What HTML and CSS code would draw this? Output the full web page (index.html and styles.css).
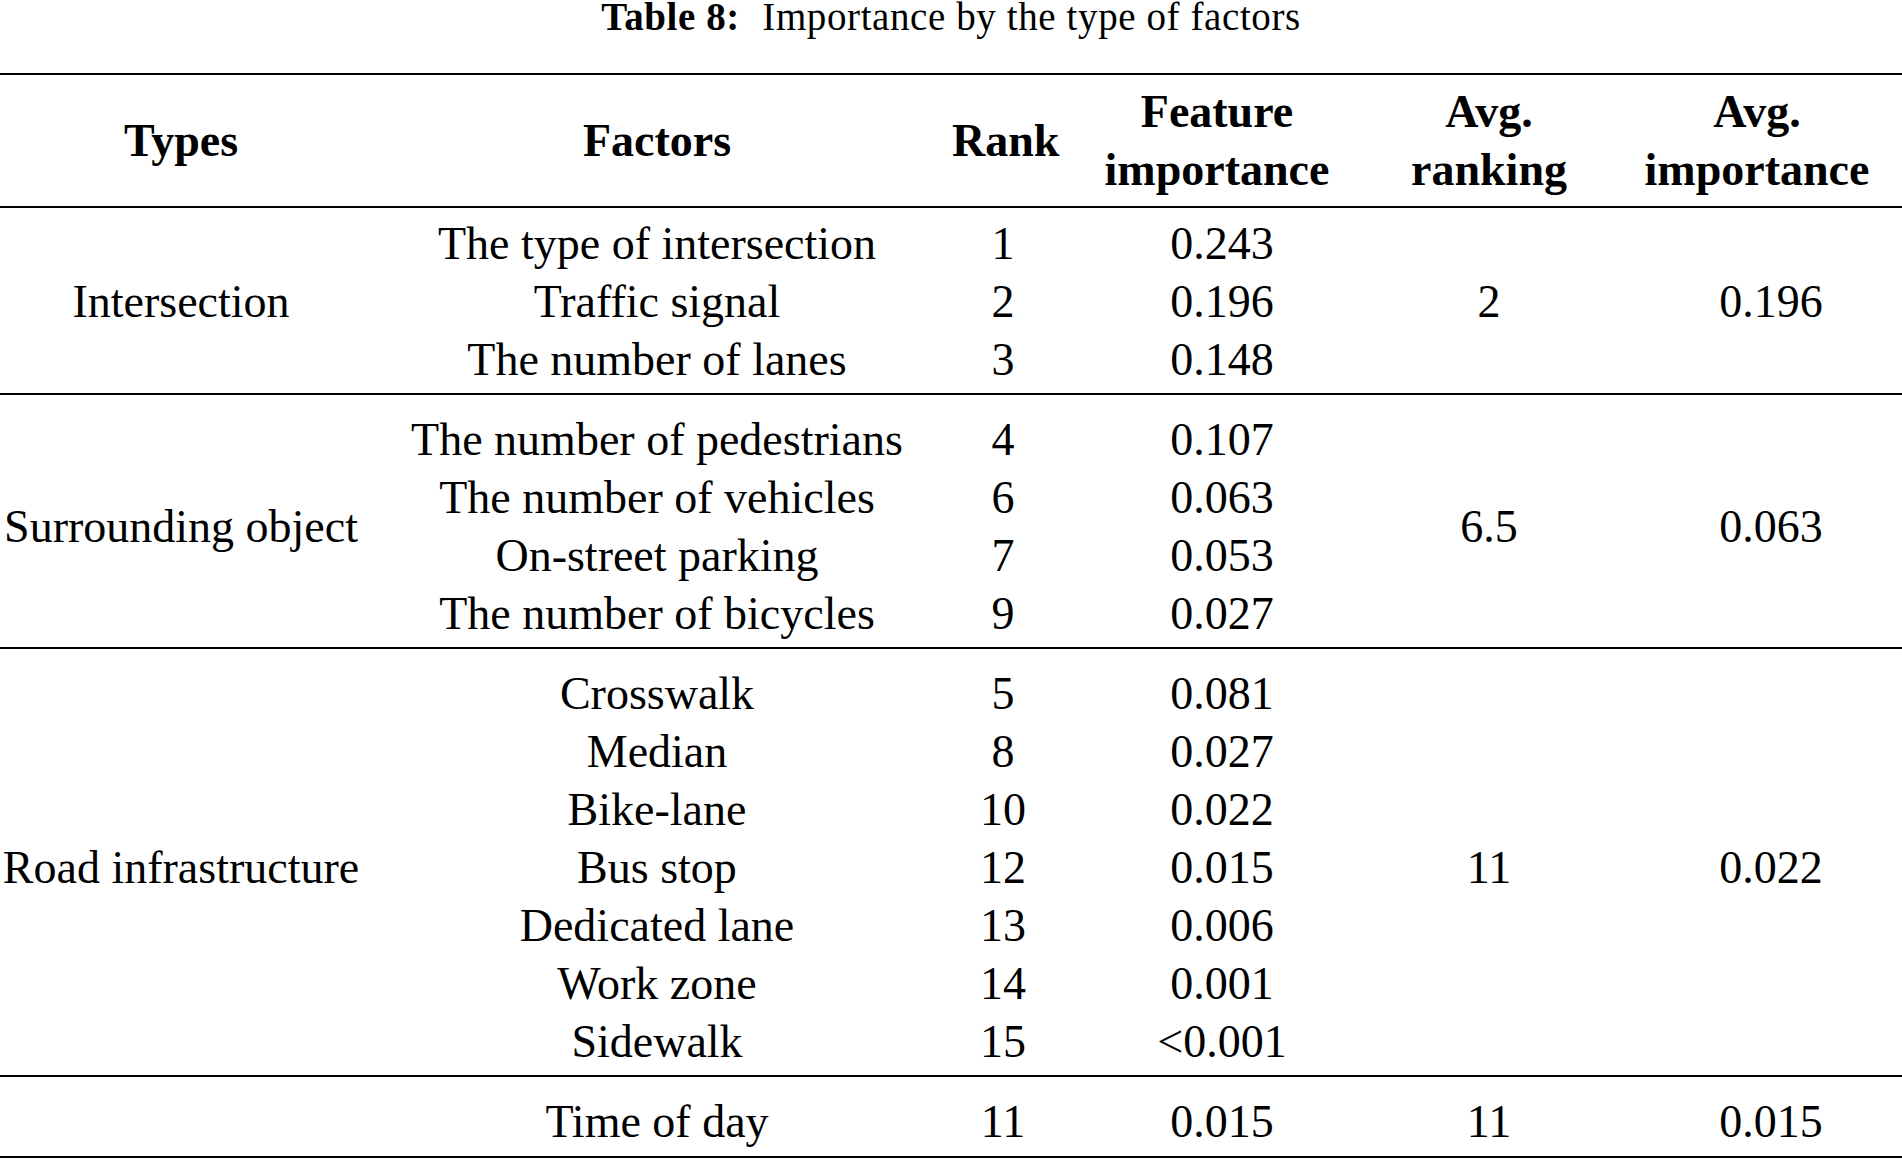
FILE: index.html
```html
<!DOCTYPE html>
<html lang="en">
<head>
<meta charset="utf-8">
<title>Table 8: Importance by the type of factors</title>
<link rel="stylesheet" href="styles.css">
</head>
<body>
<div class="caption"><span class="label">Table 8:</span> Importance by the type of factors</div>
<table class="data">
  <colgroup>
    <col class="c-type">
    <col class="c-factor">
    <col class="c-rank">
    <col class="c-fi">
    <col class="c-ar">
    <col class="c-ai">
  </colgroup>
  <thead>
    <tr>
      <th>Types</th>
      <th>Factors</th>
      <th>Rank</th>
      <th>Feature<br>importance</th>
      <th>Avg.<br>ranking</th>
      <th class="ai-h">Avg.<br>importance</th>
    </tr>
  </thead>
  <tbody class="grp first">
    <tr>
      <td class="span" rowspan="3">Intersection</td>
      <td>The type of intersection</td>
      <td class="rk">1</td>
      <td class="fi">0.243</td>
      <td class="span" rowspan="3">2</td>
      <td class="span ai" rowspan="3">0.196</td>
    </tr>
    <tr><td>Traffic signal</td><td class="rk">2</td><td class="fi">0.196</td></tr>
    <tr><td>The number of lanes</td><td class="rk">3</td><td class="fi">0.148</td></tr>
  </tbody>
  <tbody class="grp">
    <tr>
      <td class="span" rowspan="4">Surrounding object</td>
      <td>The number of pedestrians</td>
      <td class="rk">4</td>
      <td class="fi">0.107</td>
      <td class="span" rowspan="4">6.5</td>
      <td class="span ai" rowspan="4">0.063</td>
    </tr>
    <tr><td>The number of vehicles</td><td class="rk">6</td><td class="fi">0.063</td></tr>
    <tr><td>On-street parking</td><td class="rk">7</td><td class="fi">0.053</td></tr>
    <tr><td>The number of bicycles</td><td class="rk">9</td><td class="fi">0.027</td></tr>
  </tbody>
  <tbody class="grp">
    <tr>
      <td class="span" rowspan="7">Road infrastructure</td>
      <td>Crosswalk</td>
      <td class="rk">5</td>
      <td class="fi">0.081</td>
      <td class="span" rowspan="7">11</td>
      <td class="span ai" rowspan="7">0.022</td>
    </tr>
    <tr><td>Median</td><td class="rk">8</td><td class="fi">0.027</td></tr>
    <tr><td>Bike-lane</td><td class="rk">10</td><td class="fi">0.022</td></tr>
    <tr><td>Bus stop</td><td class="rk">12</td><td class="fi">0.015</td></tr>
    <tr><td>Dedicated lane</td><td class="rk">13</td><td class="fi">0.006</td></tr>
    <tr><td>Work zone</td><td class="rk">14</td><td class="fi">0.001</td></tr>
    <tr><td>Sidewalk</td><td class="rk">15</td><td class="fi">&lt;0.001</td></tr>
  </tbody>
  <tbody class="grp last">
    <tr>
      <td></td>
      <td>Time of day</td>
      <td class="rk">11</td>
      <td class="fi">0.015</td>
      <td>11</td>
      <td class="ai">0.015</td>
    </tr>
  </tbody>
</table>
</body>
</html>
```
FILE: styles.css
```css
html, body {
  margin: 0;
  padding: 0;
  background: #ffffff;
}

body {
  width: 1902px;
  font-family: "Liberation Serif", "Times New Roman", serif;
  color: #000000;
}

.caption {
  font-size: 39px;
  line-height: 34px;
  height: 34px;
  text-align: center;
  margin-bottom: 39px;
  letter-spacing: 0.6px;
  white-space: nowrap;
}

.caption .label {
  font-weight: bold;
  margin-right: 12px;
}

.data {
  width: 1902px;
  table-layout: fixed;
  border-collapse: separate;
  border-spacing: 0;
  font-size: 46px;
  line-height: 58px;
}

.c-type { width: 362px; }
.c-factor { width: 590px; }
.c-rank { width: 96px; }
.c-fi { width: 338px; }
.c-ar { width: 206px; }
.c-ai { width: 310px; }

.data th,
.data td {
  padding: 0;
  text-align: center;
  vertical-align: middle;
  white-space: nowrap;
}

.data th {
  font-weight: bold;
  border-top: 2px solid #000;
  border-bottom: 2px solid #000;
  padding-top: 7.5px;
  padding-bottom: 7.5px;
}

.data th.ai-h {
  padding-left: 20px;
}

.data td.ai {
  padding-left: 48px;
}

.data td.fi {
  padding-left: 10px;
}

.data td.rk {
  padding-left: 6px;
}

.grp tr:first-child td {
  padding-top: 16px;
}

.grp.first tr:first-child td {
  padding-top: 7px;
}

.grp tr:last-child td,
.grp td.span {
  padding-bottom: 4px;
  border-bottom: 2px solid #000;
}

.grp.last tr:last-child td {
  padding-bottom: 5px;
}
```
